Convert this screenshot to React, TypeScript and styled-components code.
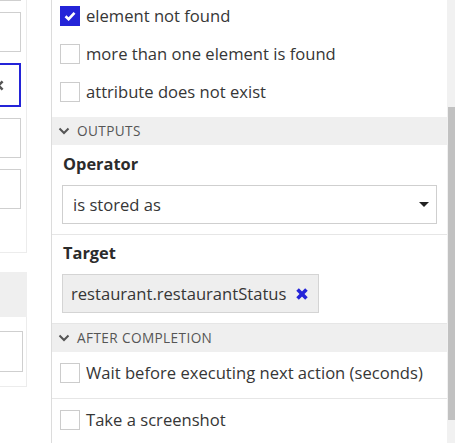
import * as React from "react";
import styled, { createGlobalStyle } from "styled-components";

const blue = "#2424d8";
const text = "#363636";
const line = "#e6e6e6";
const headerBg = "#efefef";

const GlobalStyle = createGlobalStyle`
  html, body {
    margin: 0;
    padding: 0;
    background: #fff;
  }
  body {
    font-family: "Open Sans", "Liberation Sans", sans-serif;
    color: ${text};
  }
`;

const Page = styled.div`
  display: flex;
  width: 455px;
  height: 443px;
  overflow: hidden;
  background: #fff;
`;

// left panel, mostly scrolled out of view

const LeftPane = styled.div`
  width: 27px;
  flex-shrink: 0;
`;

const LeftCard = styled.div<{ $padRight: number; $padTop: number; $padBottom: number }>`
  display: flex;
  flex-direction: column;
  align-items: flex-end;
  gap: 11px;
  overflow: hidden;
  border-right: 1px solid #ececec;
  border-bottom: 1px solid #ececec;
  padding: ${(p) => p.$padTop}px ${(p) => p.$padRight}px ${(p) => p.$padBottom}px 0;
`;

const LeftHeader = styled.div`
  height: 45px;
  margin-top: 19px;
  background: ${headerBg};
`;

const Input = styled.div<{ $focused?: boolean }>`
  box-sizing: border-box;
  flex-shrink: 0;
  width: 300px;
  height: ${(p) => (p.$focused ? 44 : 40)}px;
  border: ${(p) => (p.$focused ? `2px solid ${blue}` : "1px solid #cfcfcf")};
  background: #fff;
  display: flex;
  align-items: center;
  justify-content: flex-end;
  padding-right: 15px;
`;

const Spacer = styled.div`
  width: 24px;
  flex-shrink: 0;
`;

// right panel

const RightPane = styled.div`
  flex: 1;
  min-width: 0;
  border-left: 1px solid #dcdcdc;
`;

const CheckList = styled.div`
  margin-top: -3px;
  padding-bottom: 6px;
`;

const CheckRow = styled.label`
  display: flex;
  align-items: center;
  gap: 6px;
  height: 38px;
  padding-left: 8px;
  font-size: 16.6px;
  line-height: 20px;
`;

const OptionRow = styled(CheckRow)`
  height: auto;
  padding-top: 11px;
  padding-bottom: 15px;
  border-bottom: 1px solid ${line};
`;

const Box = styled.span<{ $checked?: boolean }>`
  box-sizing: border-box;
  width: 20px;
  height: 20px;
  flex-shrink: 0;
  display: flex;
  align-items: center;
  justify-content: center;
  border: 1px solid ${(p) => (p.$checked ? blue : "#cccccc")};
  background: ${(p) => (p.$checked ? blue : "#fff")};
`;

const SectionHeader = styled.div`
  height: 28px;
  display: flex;
  align-items: center;
  gap: 7px;
  padding-left: 6px;
  background: ${headerBg};
  font-size: 13.6px;
  line-height: 18px;
  letter-spacing: 0.4px;
  text-transform: uppercase;
  color: #555;
`;

const Field = styled.div<{ $top: number }>`
  padding: ${(p) => p.$top}px 10px 10px;
  border-bottom: 1px solid ${line};

  &:last-of-type {
    border-bottom: none;
  }
`;

const Label = styled.div`
  font-size: 16.4px;
  font-weight: 700;
  line-height: 22px;
  color: #2b2b2b;
  padding-left: 1px;
  margin-bottom: 10px;
`;

const Select = styled.div`
  box-sizing: border-box;
  height: 39px;
  border: 1px solid #cfcfcf;
  display: flex;
  align-items: center;
  justify-content: space-between;
  padding: 0 7px 0 10px;
  font-size: 16.6px;
`;

const Caret = styled.span`
  width: 0;
  height: 0;
  border-left: 5px solid transparent;
  border-right: 5px solid transparent;
  border-top: 5px solid #222;
`;

const Chip = styled.div`
  box-sizing: border-box;
  display: inline-flex;
  align-items: center;
  gap: 10px;
  height: 39px;
  padding: 0 10px 0 8px;
  background: #eeeeee;
  border: 1px solid #d4d4d4;
  font-size: 16.6px;
`;

const Scrollbar = styled.div`
  width: 8px;
  flex-shrink: 0;
  background: #f1f1f1;
  padding-top: 107px;
`;

const Thumb = styled.div`
  margin-left: 1px;
  height: 313px;
  background: #c1c1c1;
`;

const Check = () => (
  <svg width="12" height="10" viewBox="0 0 12 10">
    <polyline points="1.5,5.2 4.6,8.2 10.5,1.8" fill="none" stroke="#fff" strokeWidth="2.6" />
  </svg>
);

const Chevron = () => (
  <svg width="12" height="8" viewBox="0 0 12 8">
    <polyline points="1.5,1.5 6,6 10.5,1.5" fill="none" stroke="#555" strokeWidth="2" />
  </svg>
);

const Cross = ({ color, size, weight }: { color: string; size: number; weight: number }) => (
  <svg width={size} height={size} viewBox="0 0 10 10">
    <path d="M1.3 1.3 L8.7 8.7 M8.7 1.3 L1.3 8.7" stroke={color} strokeWidth={weight} />
  </svg>
);

const conditions = [
  { label: "element not found", checked: true },
  { label: "more than one element is found", checked: false },
  { label: "attribute does not exist", checked: false },
];

const App: React.FC = () => (
  <>
    <GlobalStyle />
    <Page>
      <LeftPane>
        <LeftCard $padTop={0} $padRight={5} $padBottom={43}>
          <Input style={{ marginTop: -39 }} />
          <Input />
          <Input $focused>
            <Cross color="#555" size={11} weight={2.4} />
          </Input>
          <Input />
          <Input />
        </LeftCard>
        <LeftHeader />
        <LeftCard $padTop={14} $padRight={3} $padBottom={14}>
          <Input style={{ height: 41 }} />
        </LeftCard>
      </LeftPane>
      <Spacer />
      <RightPane>
        <CheckList>
          {conditions.map((c) => (
            <CheckRow key={c.label}>
              <Box $checked={c.checked}>{c.checked && <Check />}</Box>
              {c.label}
            </CheckRow>
          ))}
        </CheckList>
        <SectionHeader>
          <Chevron />
          Outputs
        </SectionHeader>
        <Field $top={8}>
          <Label>Operator</Label>
          <Select>
            is stored as
            <Caret />
          </Select>
        </Field>
        <Field $top={7}>
          <Label>Target</Label>
          <Chip>
            restaurant.restaurantStatus
            <Cross color={blue} size={12} weight={3} />
          </Chip>
        </Field>
        <SectionHeader>
          <Chevron />
          After completion
        </SectionHeader>
        <OptionRow>
          <Box />
          Wait before executing next action (seconds)
        </OptionRow>
        <OptionRow>
          <Box />
          Take a screenshot
        </OptionRow>
      </RightPane>
      <Scrollbar>
        <Thumb />
      </Scrollbar>
    </Page>
  </>
);

export default App;
